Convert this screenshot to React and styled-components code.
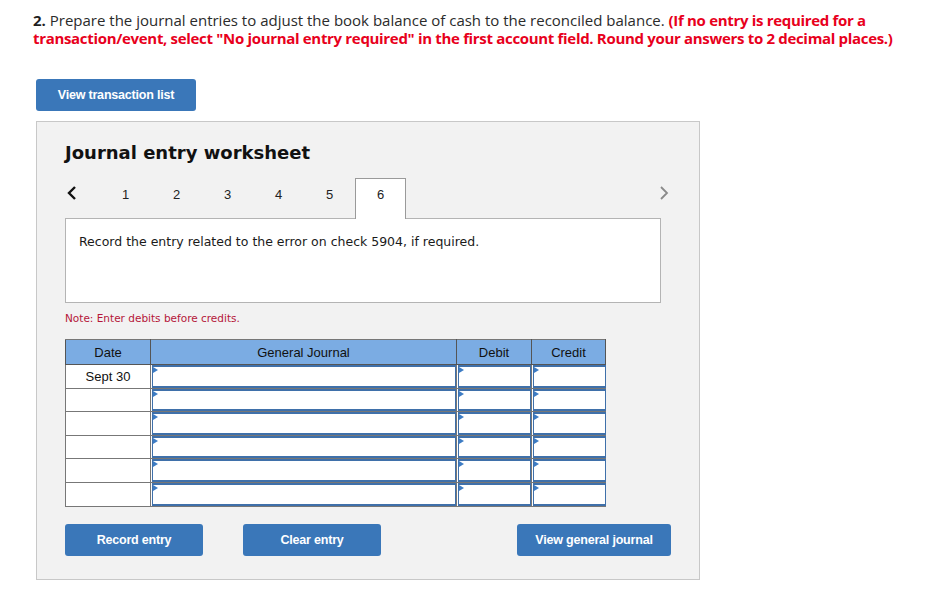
import React from 'react'
import styled, { createGlobalStyle } from 'styled-components'

const GlobalStyle = createGlobalStyle`
  body {
    margin: 0;
    background: #fff;
    font-family: "Open Sans", "Liberation Sans", sans-serif;
  }
`

const Page = styled.div`
  padding: 11px 0 17px 33px;
`

const Question = styled.p`
  margin: 0;
  font-size: 15px;
  line-height: 18px;
  color: #2b2b2b;
  b {
    font-weight: 700;
    color: #1f1f1f;
  }
  strong {
    color: #e8001c;
    font-weight: 700;
    letter-spacing: -0.32px;
  }
`

const Button = styled.button`
  display: block;
  width: ${p => p.w}px;
  height: 32px;
  padding: 0;
  border: none;
  border-radius: 3px;
  background: #3a77b9;
  color: #fff;
  font-family: "Liberation Sans", Arial, sans-serif;
  font-weight: 700;
  font-size: 12.5px;
  letter-spacing: -0.2px;
  cursor: pointer;
`

const TopButton = styled(Button)`
  margin: 32px 0 0 3px;
`

const Panel = styled.div`
  box-sizing: border-box;
  width: 664px;
  height: 459px;
  margin: 10px 0 0 3px;
  padding: 19px 0 0 28px;
  background: #f2f2f2;
  border: 1px solid #c8c8c8;
`

const Title = styled.h2`
  margin: 0;
  font-family: "DejaVu Sans", Verdana, sans-serif;
  font-size: 18px;
  line-height: 24px;
  font-weight: 700;
  color: #111;
`

const TabRow = styled.div`
  display: flex;
  align-items: stretch;
  width: 604px;
  height: 40px;
  margin-top: 13px;
`

const Chevron = styled.div`
  width: ${p => p.w}px;
  display: flex;
  align-items: flex-start;
  justify-content: ${p => (p.right ? 'flex-end' : 'flex-start')};
  padding: 7px 0 0 ${p => (p.right ? 0 : 1)}px;
  box-sizing: border-box;
`

const Tab = styled.div`
  box-sizing: border-box;
  width: 51px;
  padding-top: 8px;
  text-align: center;
  font-family: "Liberation Sans", Arial, sans-serif;
  font-size: 13px;
  line-height: 15px;
  color: #222;
  background: ${p => (p.active ? '#fff' : 'transparent')};
  border: 1px solid ${p => (p.active ? '#9a9a9a' : 'transparent')};
  border-bottom: none;
  position: relative;
  z-index: 1;
  margin-bottom: -1px;
`

const Spacer = styled.div`
  flex: 1;
`

const EntryBox = styled.div`
  box-sizing: border-box;
  width: 596px;
  height: 85px;
  padding: 14px 13px;
  background: #fff;
  border: 1px solid #b4b4b4;
  font-family: "DejaVu Sans", Verdana, sans-serif;
  font-size: 12.5px;
  line-height: 18px;
  color: #1a1a1a;
`

const Note = styled.div`
  margin-top: 8px;
  font-family: "DejaVu Sans", Verdana, sans-serif;
  font-size: 10.5px;
  line-height: 14px;
  color: #b5163a;
`

const Table = styled.table`
  margin-top: 14px;
  width: 540px;
  border-collapse: collapse;
  table-layout: fixed;
  font-family: "Liberation Sans", Arial, sans-serif;
  font-size: 13px;
  color: #111;
`

const Th = styled.th`
  height: 24px;
  padding: 0;
  font-weight: normal;
  background: #7bace3;
  border: 1px solid #555;
  border-top-color: #777;
`

const Td = styled.td`
  padding: 0;
  background: #fff;
  border: 1px solid #777;
  text-align: center;
  vertical-align: middle;
`

const InputCell = styled.td`
  padding: 0 0 0 1px;
  background: #fff;
  border: 1px solid #777;
  border-right-width: 0;
`

const Field = styled.div`
  position: relative;
  box-sizing: border-box;
  height: 22.6px;
  border: 1px solid #3f70aa;
  border-top-width: 2px;
  border-bottom-width: 2px;
  background: #fff;
  &::before {
    content: '';
    position: absolute;
    left: 0;
    top: 0;
    border-top: 3px solid transparent;
    border-bottom: 3px solid transparent;
    border-left: 5px solid #3d7cc4;
  }
`

const ButtonRow = styled.div`
  display: flex;
  width: 606px;
  margin-top: 17px;
  gap: 40px;
  & > :last-child {
    margin-left: auto;
  }
`

const LeftArrow = () => (
  <svg width="12" height="16" viewBox="0 0 12 16">
    <path d="M9 2 L3 8 L9 14" fill="none" stroke="#111" strokeWidth="2.4" />
  </svg>
)

const RightArrow = () => (
  <svg width="10" height="16" viewBox="0 0 10 16">
    <path d="M2 2 L8 8 L2 14" fill="none" stroke="#8a8a8a" strokeWidth="1.8" />
  </svg>
)

const rows = ['Sept 30', '', '', '', '', '']

const App = () => {
  return (
    <>
      <GlobalStyle />
      <Page>
        <Question>
          <b>2.</b> Prepare the journal entries to adjust the book balance of cash to the reconciled balance.{' '}
          <strong>(If no entry is required for a</strong>
          <br />
          <strong>
            transaction/event, select "No journal entry required" in the first account field. Round your answers to 2
            decimal places.)
          </strong>
        </Question>
        <TopButton w={160}>View transaction list</TopButton>
        <Panel>
          <Title>Journal entry worksheet</Title>
          <TabRow>
            <Chevron w={35}>
              <LeftArrow />
            </Chevron>
            {[1, 2, 3, 4, 5, 6].map(n => (
              <Tab key={n} active={n === 6}>
                {n}
              </Tab>
            ))}
            <Spacer />
            <Chevron w={20} right>
              <RightArrow />
            </Chevron>
          </TabRow>
          <EntryBox>Record the entry related to the error on check 5904, if required.</EntryBox>
          <Note>Note: Enter debits before credits.</Note>
          <Table>
            <colgroup>
              <col style={{ width: 85 }} />
              <col style={{ width: 306 }} />
              <col style={{ width: 75 }} />
              <col style={{ width: 74 }} />
            </colgroup>
            <thead>
              <tr>
                <Th>Date</Th>
                <Th>General Journal</Th>
                <Th>Debit</Th>
                <Th>Credit</Th>
              </tr>
            </thead>
            <tbody>
              {rows.map((d, i) => (
                <tr key={i}>
                  <Td>{d}</Td>
                  <InputCell>
                    <Field />
                  </InputCell>
                  <InputCell>
                    <Field />
                  </InputCell>
                  <InputCell>
                    <Field />
                  </InputCell>
                </tr>
              ))}
            </tbody>
          </Table>
          <ButtonRow>
            <Button w={138}>Record entry</Button>
            <Button w={138}>Clear entry</Button>
            <Button w={154}>View general journal</Button>
          </ButtonRow>
        </Panel>
      </Page>
    </>
  )
}

export default App
